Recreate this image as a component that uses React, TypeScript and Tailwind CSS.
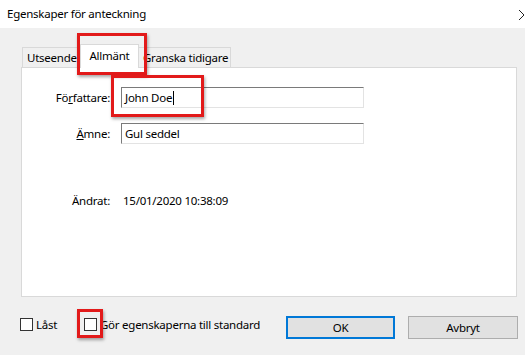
import React from 'react'

const font = { fontFamily: '"Noto Sans", "Open Sans", Arial, sans-serif' }

function Field({ value, caret }: { value: string; caret?: boolean }) {
  return (
    <div className="flex h-[21px] w-[243px] items-center border border-t-[#7a7a7a] border-l-[#7a7a7a] border-r-[#e3e3e3] border-b-[#e3e3e3] bg-white pl-[3px] text-black">
      <span>{value}</span>
      {caret && <span className="ml-[1px] h-[14px] w-px bg-black" />}
    </div>
  )
}

function Check({ label }: { label: string }) {
  return (
    <div className="flex shrink-0 items-center gap-[3px] whitespace-nowrap">
      <span className="h-[13px] w-[13px] shrink-0 border border-[#333] bg-white" />
      <span>{label}</span>
    </div>
  )
}

export default function App() {
  return (
    <div style={font} className="relative h-[355px] w-[525px] overflow-hidden whitespace-nowrap bg-[#f0f0f0] text-[11.5px] tracking-[-0.25px] text-black">
      {/* title bar */}
      <div className="flex h-[28px] items-center justify-between bg-white pl-[7px]">
        <span>Egenskaper för anteckning</span>
        <svg width="6" height="12" viewBox="0 0 6 12" className="mt-[2px]">
          <path d="M0 1 L5 6 L0 11" stroke="#222" strokeWidth="1" fill="none" />
        </svg>
      </div>

      {/* tabs */}
      <div className="pl-[21px] pr-[8px] pt-[16px]">
        <div className="flex h-[23px] items-end">
          <div className="ml-[1px] flex h-[20px] w-[58px] items-center overflow-hidden border border-b-0 border-[#d9d9d9] bg-[#f0f0f0] pl-[4px]">
            Utseende
          </div>
          <div className="relative z-10 -mb-px flex h-[24px] w-[59px] items-center justify-center border border-b-0 border-[#d9d9d9] bg-white pb-[2px]">
            Allmänt
          </div>
          <div className="flex h-[20px] w-[92px] items-center border border-b-0 border-l-0 border-[#d9d9d9] bg-[#f0f0f0] pl-[4px]">
            Granska tidigare
          </div>
        </div>

        {/* panel */}
        <div className="h-[230px] w-[496px] border border-[#d9d9d9] bg-white pt-[19px]">
          <div className="flex items-center">
            <div className="w-[89px] pr-[1px] text-right">
              Fö<span className="underline">r</span>fattare:
            </div>
            <div className="ml-[10px]">
              <Field value="John Doe" caret />
            </div>
          </div>
          <div className="mt-[15px] flex items-center">
            <div className="w-[89px] pr-[1px] text-right">
              <span className="underline">Ä</span>mne:
            </div>
            <div className="ml-[10px]">
              <Field value="Gul seddel" />
            </div>
          </div>
          <div className="mt-[48px] flex items-center">
            <div className="w-[89px] pr-[1px] text-right">Ändrat:</div>
            <div className="ml-[12px]">15/01/2020 10:38:09</div>
          </div>
        </div>
      </div>

      {/* bottom row */}
      <div className="flex items-start pl-[20px] pt-[19px]">
        <div className="flex h-[17px] w-[266px] shrink-0 items-center">
          <div className="w-[64px] shrink-0">
            <Check label="Låst" />
          </div>
          <Check label="Gör egenskaperna till standard" />
        </div>
        <button className="h-[23px] w-[109px] shrink-0 border-2 border-[#0078d7] bg-[#e1e1e1]">OK</button>
        <button className="ml-[13px] h-[23px] w-[110px] shrink-0 border border-[#adadad] bg-[#e1e1e1]">Avbryt</button>
      </div>

      {/* red annotation boxes */}
      <div className="absolute left-[77px] top-[33px] h-[42px] w-[70px] border-[3px] border-[#e21a1a] shadow-[1px_2px_3px_rgba(0,0,0,0.35)]" />
      <div className="absolute left-[111px] top-[75px] h-[42px] w-[93px] border-[3px] border-[#e21a1a] shadow-[1px_2px_3px_rgba(0,0,0,0.35)]" />
      <div className="absolute left-[77px] top-[309px] h-[29px] w-[26px] border-[3px] border-[#e21a1a] shadow-[1px_2px_3px_rgba(0,0,0,0.35)]" />
    </div>
  )
}
